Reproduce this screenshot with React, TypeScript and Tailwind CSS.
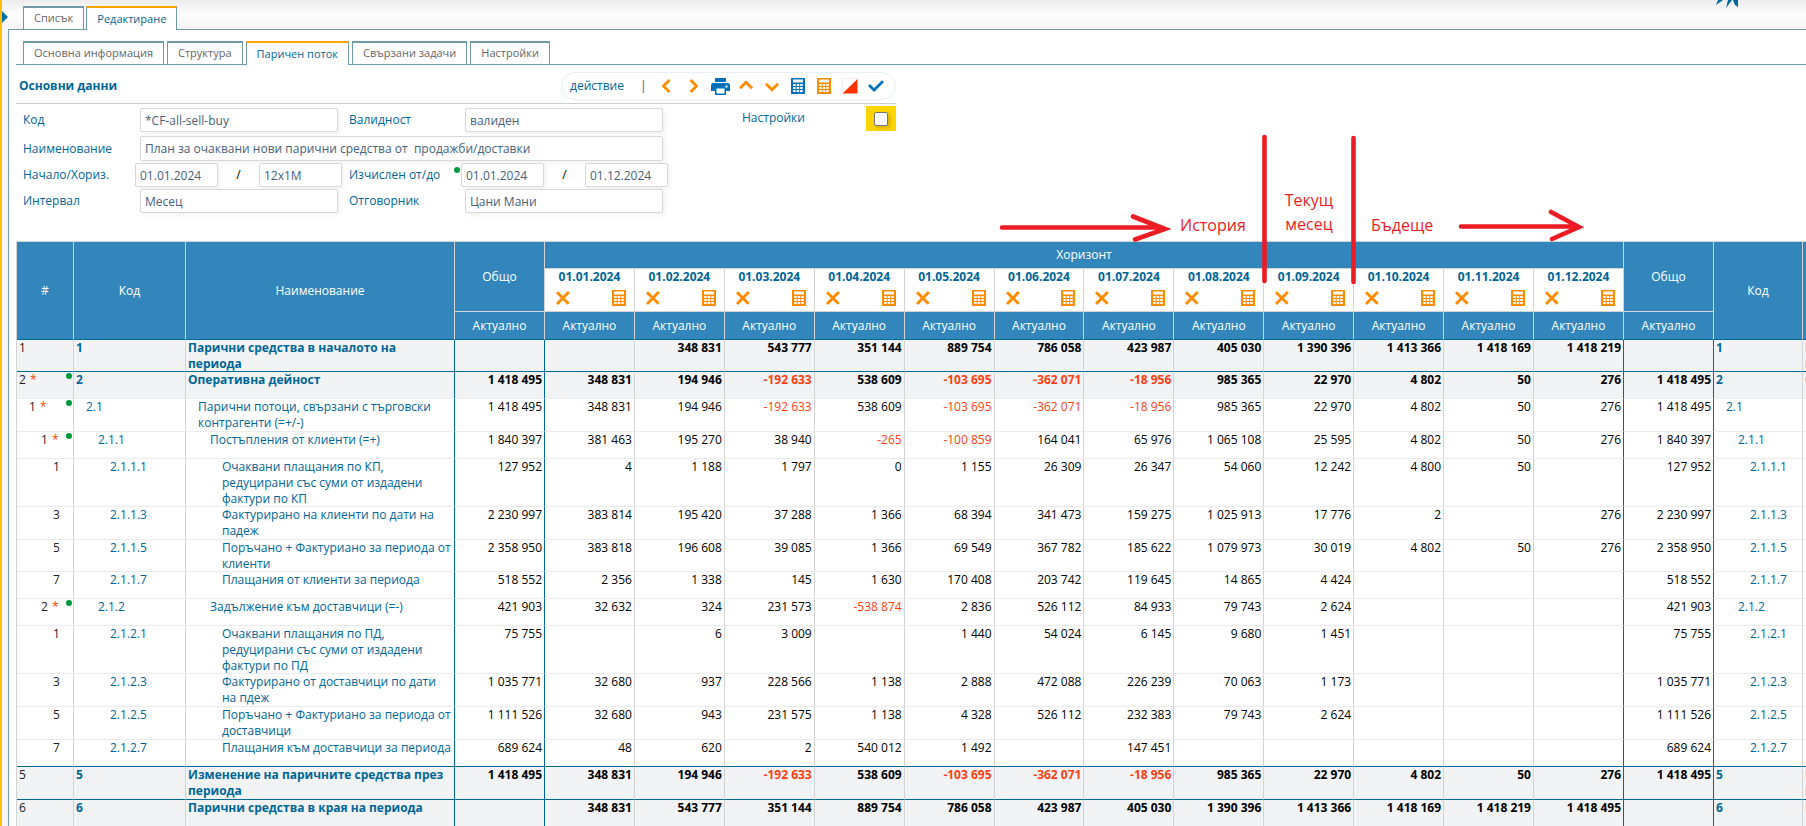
import type { ReactNode } from 'react';

type Row = {
  n: string;
  code: string;
  name: string;
  level: 0 | 1 | 2 | 3;
  height: string;
  group?: boolean;
  total: string;
  values: string[];
  darkBottom?: boolean;
};

const months = ['01', '02', '03', '04', '05', '06', '07', '08', '09', '10', '11', '12'];

const rows: Row[] = [
  { n: '1', code: '1', name: 'Парични средства в началото на\nпериода', level: 0, height: 'h-[31px]', total: '', darkBottom: true,
    values: ['', '348 831', '543 777', '351 144', '889 754', '786 058', '423 987', '405 030', '1 390 396', '1 413 366', '1 418 169', '1 418 219'] },
  { n: '2', code: '2', name: 'Оперативна дейност', level: 0, height: 'h-[26px]', group: true, total: '1 418 495',
    values: ['348 831', '194 946', '-192 633', '538 609', '-103 695', '-362 071', '-18 956', '985 365', '22 970', '4 802', '50', '276'] },
  { n: '1', code: '2.1', name: 'Парични потоци, свързани с търговски контрагенти (=+/-)', level: 1, height: 'h-8', group: true, total: '1 418 495',
    values: ['348 831', '194 946', '-192 633', '538 609', '-103 695', '-362 071', '-18 956', '985 365', '22 970', '4 802', '50', '276'] },
  { n: '1', code: '2.1.1', name: 'Постъпления от клиенти (=+)', level: 2, height: 'h-[26px]', group: true, total: '1 840 397',
    values: ['381 463', '195 270', '38 940', '-265', '-100 859', '164 041', '65 976', '1 065 108', '25 595', '4 802', '50', '276'] },
  { n: '1', code: '2.1.1.1', name: 'Очаквани плащания по КП, редуцирани със суми от издадени фактури по КП', level: 3, height: 'h-[47px]', total: '127 952',
    values: ['4', '1 188', '1 797', '0', '1 155', '26 309', '26 347', '54 060', '12 242', '4 800', '50', ''] },
  { n: '3', code: '2.1.1.3', name: 'Фактурирано на клиенти по дати на падеж', level: 3, height: 'h-8', total: '2 230 997',
    values: ['383 814', '195 420', '37 288', '1 366', '68 394', '341 473', '159 275', '1 025 913', '17 776', '2', '', '276'] },
  { n: '5', code: '2.1.1.5', name: 'Поръчано + Фактуриано за периода от клиенти', level: 3, height: 'h-[31px]', total: '2 358 950',
    values: ['383 818', '196 608', '39 085', '1 366', '69 549', '367 782', '185 622', '1 079 973', '30 019', '4 802', '50', '276'] },
  { n: '7', code: '2.1.1.7', name: 'Плащания от клиенти за периода', level: 3, height: 'h-[26px]', total: '518 552',
    values: ['2 356', '1 338', '145', '1 630', '170 408', '203 742', '119 645', '14 865', '4 424', '', '', ''] },
  { n: '2', code: '2.1.2', name: 'Задължение към доставчици (=-)', level: 2, height: 'h-[26px]', group: true, total: '421 903',
    values: ['32 632', '324', '231 573', '-538 874', '2 836', '526 112', '84 933', '79 743', '2 624', '', '', ''] },
  { n: '1', code: '2.1.2.1', name: 'Очаквани плащания по ПД, редуцирани със суми от издадени фактури по ПД', level: 3, height: 'h-[47px]', total: '75 755',
    values: ['', '6', '3 009', '', '1 440', '54 024', '6 145', '9 680', '1 451', '', '', ''] },
  { n: '3', code: '2.1.2.3', name: 'Фактурирано от доставчици по дати\nна пдеж', level: 3, height: 'h-8', total: '1 035 771',
    values: ['32 680', '937', '228 566', '1 138', '2 888', '472 088', '226 239', '70 063', '1 173', '', '', ''] },
  { n: '5', code: '2.1.2.5', name: 'Поръчано + Фактуриано за периода от доставчици', level: 3, height: 'h-8', total: '1 111 526',
    values: ['32 680', '943', '231 575', '1 138', '4 328', '526 112', '232 383', '79 743', '2 624', '', '', ''] },
  { n: '7', code: '2.1.2.7', name: 'Плащания към доставчици за периода', level: 3, height: 'h-[26px]', total: '689 624', darkBottom: true,
    values: ['48', '620', '2', '540 012', '1 492', '', '147 451', '', '', '', '', ''] },
  { n: '5', code: '5', name: 'Изменение на паричните средства през периода', level: 0, height: 'h-8', total: '1 418 495', darkBottom: true,
    values: ['348 831', '194 946', '-192 633', '538 609', '-103 695', '-362 071', '-18 956', '985 365', '22 970', '4 802', '50', '276'] },
  { n: '6', code: '6', name: 'Парични средства в края на периода', level: 0, height: 'h-[26px]', total: '',
    values: ['348 831', '543 777', '351 144', '889 754', '786 058', '423 987', '405 030', '1 390 396', '1 413 366', '1 418 169', '1 418 219', '1 418 495'] },
];

const indent = ['pl-0.5', 'pl-3', 'pl-6', 'pl-9'];

function Calculator({ className }: { className: string }) {
  return (
    <svg viewBox="0 0 14 16" className={'h-4 w-[14px] ' + className} aria-hidden="true">
      <rect width="14" height="16" fill="currentColor" />
      <g fill="#fff">
        <rect x="2" y="1.5" width="10" height="3" />
        {[6, 9, 12].map((y) => [2.2, 5.7, 9.2].map((x) => <rect key={x + '-' + y} x={x} y={y} width="2.5" height="2" />))}
      </g>
    </svg>
  );
}

function Cross() {
  return (
    <svg viewBox="0 0 14 14" className="block h-[14px] w-[14px] text-[#ff8c00]" aria-hidden="true">
      <path d="M1 1.2 12.600 12.800M12.800 1 1 13" fill="none" stroke="currentColor" strokeWidth="2.900" />
    </svg>
  );
}

function Chevron({ d, box, className }: { d: string; box: string; className: string }) {
  return (
    <svg viewBox={box} className={className} aria-hidden="true">
      <path d={d} fill="none" stroke="currentColor" strokeWidth="2.8" />
    </svg>
  );
}

function Tab({ children, active }: { children: ReactNode; active?: boolean }) {
  return (
    <button
      type="button"
      role="tab"
      aria-selected={!!active}
      className={
        active
          ? '-mb-px h-6 border border-b-0 border-t-2 border-[#7099aa] border-t-[#ffa500] bg-white px-2.5 text-[11px] text-[#069]'
          : 'h-[23px] border border-b-0 border-t-2 border-[#7099aa] bg-white px-2.5 text-[11px] text-[#666]'
      }
    >
      {children}
    </button>
  );
}

function Field({ id, value, className }: { id: string; value: string; className: string }) {
  return (
    <input
      id={id}
      defaultValue={value}
      className={'rounded-xs border border-[#d8d8d8] bg-white pl-1 text-[#46627a] shadow-[2px_2px_5px_rgba(0,0,0,0.06)] outline-none ' + className}
    />
  );
}

function HeadCell({ children, rowSpan, colSpan, last }: { children?: ReactNode; rowSpan?: number; colSpan?: number; last?: boolean }) {
  return (
    <th
      rowSpan={rowSpan}
      colSpan={colSpan}
      className={
        'border-r border-b border-r-[#d3d3d3] bg-[#3286bc] p-0 text-center font-normal text-white ' +
        (last ? 'border-b-[#00699c]' : 'border-b-[#d3d3d3]')
      }
    >
      {children}
    </th>
  );
}

function ToolButton({ label, children, className }: { label: string; children: ReactNode; className: string }) {
  return (
    <button type="button" aria-label={label} className={'flex h-5 items-center justify-center ' + className}>
      {children}
    </button>
  );
}

function Toolbar() {
  return (
    <div className="flex h-7 w-[335px] items-center rounded-full border border-[#e6f0f5] pl-2 text-[#069]">
      <button type="button" className="w-[54px] text-left">действие</button>
      <span className="ml-4 w-1">|</span>
      <div className="ml-2 flex items-center text-[#ff8c00]">
        <ToolButton label="Назад" className="w-7">
          <Chevron box="0 0 10 14" d="M8.500 1 2.500 7l6 6" className="h-[14px] w-[10px]" />
        </ToolButton>
        <ToolButton label="Напред" className="w-7">
          <Chevron box="0 0 10 14" d="M1.500 1l6 6-6 6" className="h-[14px] w-[10px]" />
        </ToolButton>
        <ToolButton label="Печат" className="w-6 text-[#0072bc]">
          <svg viewBox="0 0 19 17" className="h-[17px] w-[19px]" aria-hidden="true">
            <path fill="currentColor" d="M4 0h11v4H4zM2.500 5h14A2.500 2.500 0 0 1 19 7.500V13h-4v4H4v-4H0V7.500A2.500 2.500 0 0 1 2.500 5z" />
            <path fill="#fff" d="M5.500 10.500h8v5h-8zM14.500 7.500h2v2h-2z" />
          </svg>
        </ToolButton>
        <ToolButton label="Нагоре" className="w-7 pb-0.5">
          <Chevron box="0 0 14 10" d="M1 8.200 7 2.200l6 6" className="h-[10px] w-[14px]" />
        </ToolButton>
        <ToolButton label="Надолу" className="w-6 pt-0.5">
          <Chevron box="0 0 14 10" d="M1 1.800 7 7.800l6-6" className="h-[10px] w-[14px]" />
        </ToolButton>
        <ToolButton label="Изчисли всички" className="w-7">
          <Calculator className="text-[#0072bc]" />
        </ToolButton>
        <ToolButton label="Изчисли" className="w-6">
          <Calculator className="text-[#ff8c00]" />
        </ToolButton>
        <ToolButton label="Филтър" className="w-7">
          <svg viewBox="0 0 16 16" className="h-4 w-4" aria-hidden="true">
            <path fill="#eee" d="M0 0h16v1H1v15H0z" />
            <path fill="#ff3300" d="M15.500 1v14.500H.5z" />
          </svg>
        </ToolButton>
        <ToolButton label="Запис" className="w-6 text-[#0072bc]">
          <svg viewBox="0 0 16 12" className="h-3 w-4" aria-hidden="true">
            <path fill="none" stroke="currentColor" strokeWidth="2.700" d="M1 5l5 5L15 1.200" />
          </svg>
        </ToolButton>
      </div>
    </div>
  );
}

function Form() {
  return (
    <div className="flex w-[880px] items-start justify-between pt-1 text-[#069]">
      <div className="pl-[7px]">
        <div className="flex items-center">
          <label htmlFor="code" className="w-[117px]">Код</label>
          <Field id="code" value="*CF-all-sell-buy" className="h-6 w-[198px]" />
          <label htmlFor="valid" className="ml-[11px] w-[116px]">Валидност</label>
          <Field id="valid" value="валиден" className="h-6 w-[198px]" />
        </div>
        <div className="mt-1 flex items-center">
          <label htmlFor="name" className="w-[117px]">Наименование</label>
          <Field id="name" value="План за очаквани нови парични средства от  продажби/доставки" className="h-[25px] w-[523px]" />
        </div>
        <div className="mt-0.5 flex items-center">
          <label htmlFor="start" className="w-[112px]">Начало/Хориз.</label>
          <Field id="start" value="01.01.2024" className="h-6 w-[83px]" />
          <span className="w-[41px] text-center text-black">/</span>
          <Field id="horizon" value="12x1M" className="h-6 w-[83px]" />
          <label htmlFor="from" className="ml-[7px] flex w-[112px] justify-between">
            Изчислен от/до
            <span className="mr-px h-1.5 w-1.5 rounded-full bg-[#00993a]" />
          </label>
          <Field id="from" value="01.01.2024" className="h-6 w-[83px]" />
          <span className="w-[41px] text-center text-black">/</span>
          <Field id="to" value="01.12.2024" className="h-6 w-[83px]" />
        </div>
        <div className="mt-0.5 flex items-center">
          <label htmlFor="interval" className="w-[117px]">Интервал</label>
          <Field id="interval" value="Месец" className="h-6 w-[198px]" />
          <label htmlFor="owner" className="ml-[11px] w-[116px]">Отговорник</label>
          <Field id="owner" value="Цани Мани" className="h-6 w-[198px]" />
        </div>
      </div>
      <div className="-mt-0.5 flex w-[154px] items-start justify-between">
        <label htmlFor="settings" className="pt-1">Настройки</label>
        <span className="flex h-[25px] w-[30px] items-center justify-center bg-[#ffd500]">
          <input
            id="settings"
            type="checkbox"
            className="h-[14px] w-[14px] appearance-none rounded-xs border border-[#767676] bg-white shadow-[2px_2px_4px_rgba(0,0,0,0.2)]"
          />
        </span>
      </div>
    </div>
  );
}

function DataRow({ row }: { row: Row }) {
  const strong = row.level === 0;
  const base =
    'border-r border-b p-0 align-top ' +
    (strong ? 'bg-[#f2f3f5] ' : 'bg-white ') +
    (row.darkBottom ? 'border-b-[#00699c] ' : 'border-b-[#ececec] ');
  const light = base + 'border-r-[#d3d3d3] ';
  const dark = base + 'border-r-[#00699c] ';
  const weight = strong ? 'font-bold ' : '';
  const number = 'pr-0.5 text-right whitespace-nowrap ' + weight;
  return (
    <tr>
      <td className={light}>
        <div className={'flex items-start justify-between pr-px ' + indent[row.level]}>
          <span className="flex gap-1 text-[#222]">
            {row.n}
            {row.group && <span className="text-[#ff4500]">*</span>}
          </span>
          {row.group && <span className="mt-px h-1.5 w-1.5 rounded-full bg-[#00993a]" />}
        </div>
      </td>
      <td className={light + weight + 'text-[#069] ' + indent[row.level]}>{row.code}</td>
      <td className={dark + weight + 'text-[#069] ' + indent[row.level]}>
        <div className={'whitespace-pre-line ' + row.height}>{row.name}</div>
      </td>
      <td className={dark + number}>{row.total}</td>
      {row.values.map((v, i) => (
        <td key={i} className={(i === 11 ? dark : light) + number + (v.startsWith('-') ? 'text-[#ff4010]' : 'text-black')}>
          {v}
        </td>
      ))}
      <td className={dark + number}>{row.total}</td>
      <td className={light + weight + 'text-[#069] ' + indent[row.level]}>{row.code}</td>
      <td className={light + weight + 'text-[#069] ' + indent[row.level]}>
        <div className={'whitespace-pre-line ' + row.height}>{row.name}</div>
      </td>
    </tr>
  );
}

function FlowTable() {
  return (
    <table className="mt-7 w-[2056px] table-fixed border-separate border-spacing-0 border-t border-l border-[#d3d3d3] leading-4 text-black">
      <colgroup>
        <col className="w-[57px]" />
        <col className="w-[112px]" />
        <col className="w-[269px]" />
        <col className="w-[90px]" />
        {months.map((m) => <col key={m} />)}
        <col className="w-[90px]" />
        <col className="w-[89px]" />
        <col className="w-[269px]" />
      </colgroup>
      <thead>
        <tr className="h-[27px]">
          <HeadCell rowSpan={3} last>#</HeadCell>
          <HeadCell rowSpan={3} last>Код</HeadCell>
          <HeadCell rowSpan={3} last>Наименование</HeadCell>
          <HeadCell rowSpan={2}>Общо</HeadCell>
          <HeadCell colSpan={12}>Хоризонт</HeadCell>
          <HeadCell rowSpan={2}>Общо</HeadCell>
          <HeadCell rowSpan={3} last>Код</HeadCell>
          <HeadCell rowSpan={3} last>Наименование</HeadCell>
        </tr>
        <tr className="h-[43px]">
          {months.map((m) => (
            <th key={m} className="border-r border-b border-[#d3d3d3] bg-white p-0 align-top text-[#069]">
              {'01.' + m + '.2024'}
              <div className="mt-[5px] flex items-center justify-between pr-2 pl-[11px]">
                <button type="button" aria-label={'Изчисти ' + m}><Cross /></button>
                <button type="button" aria-label={'Изчисли ' + m}><Calculator className="block text-[#ff8c00]" /></button>
              </div>
            </th>
          ))}
        </tr>
        <tr className="h-[28px]">
          {[...months, 'a', 'b'].map((m) => <HeadCell key={m} last>Актуално</HeadCell>)}
        </tr>
      </thead>
      <tbody>
        {rows.map((row) => <DataRow key={row.code} row={row} />)}
      </tbody>
    </table>
  );
}

function Annotations() {
  return (
    <div className="pointer-events-none absolute top-0 left-0 text-base text-[#ed1c24]">
      <svg width="620" height="170" viewBox="0 0 620 170" className="absolute top-[125px] left-[986px] max-w-none" aria-hidden="true">
        <g fill="none" stroke="currentColor" strokeWidth="4.600" strokeLinecap="round">
          <path d="M276.500 12v144M365.500 13v144" />
          <path d="M14 102.500H174M145 91.500 177 104 147 114.500" />
          <path d="M473 101.500H590M563 87 591 102 564 114" />
        </g>
      </svg>
      <span className="absolute top-[213px] left-[1178px]">История</span>
      <span className="absolute top-[188px] left-[1262px] w-[90px] text-center">Текущ<br />месец</span>
      <span className="absolute top-[213px] left-[1369px]">Бъдеще</span>
    </div>
  );
}

export default function App() {
  return (
    <div className="relative h-screen overflow-hidden border-l-2 border-[#ffbf00] bg-[#f2f4f6] font-['Open_Sans',sans-serif] text-xs">
      <header className="relative flex h-[29px] items-end gap-0.5 bg-linear-to-b from-[#ececec] via-[#fdfdfd] to-[#f4f4f4] pl-[21px]">
        <svg viewBox="0 0 6 12" className="absolute top-[11px] left-0 h-3 w-1.5" aria-hidden="true">
          <path fill="#0072ab" d="M0 0l6 6-6 6z" />
        </svg>
        <svg viewBox="0 0 24 9" className="absolute top-0 right-[67px] h-[9px] w-6" aria-hidden="true">
          <path fill="#069" d="M3 0h5L1 5zM13 0h4l-6 8zM18 0h5v7l-3-2z" />
        </svg>
        <Tab>Списък</Tab>
        <div className="relative z-10 flex"><Tab active>Редактиране</Tab></div>
      </header>
      <main className="ml-1.5 h-full border-t border-l border-[#7099aa] bg-white pt-[11px] pl-[7px]">
        <div role="tablist" className="flex h-6 items-start gap-[3px] border-b border-[#7099aa] pl-[7px]">
          <Tab>Основна информация</Tab>
          <Tab>Структура</Tab>
          <Tab active>Паричен поток</Tab>
          <Tab>Свързани задачи</Tab>
          <Tab>Настройки</Tab>
        </div>
        <div className="mt-[7px] flex h-8 w-[880px] items-start justify-between border-b border-[#cfcfcf] pl-[3px]">
          <h1 className="mt-1.5 font-bold text-[#069]">Основни данни</h1>
          <Toolbar />
        </div>
        <Form />
        <FlowTable />
      </main>
      <Annotations />
    </div>
  );
}
